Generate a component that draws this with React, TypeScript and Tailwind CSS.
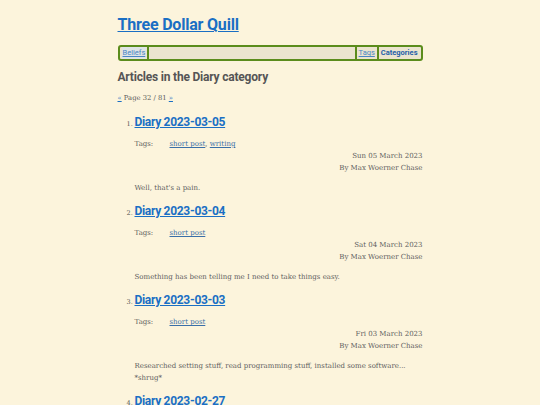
const heading = "font-['Roboto','Noto_Sans',sans-serif]";
const body = "font-['DejaVu_Serif','Liberation_Serif',serif]";

type Article = {
  title: string;
  tags: string[];
  date: string;
  summary: string[];
};

const articles: Article[] = [
  {
    title: "Diary 2023-03-05",
    tags: ["short post", "writing"],
    date: "Sun 05 March 2023",
    summary: ["Well, that's a pain."],
  },
  {
    title: "Diary 2023-03-04",
    tags: ["short post"],
    date: "Sat 04 March 2023",
    summary: ["Something has been telling me I need to take things easy."],
  },
  {
    title: "Diary 2023-03-03",
    tags: ["short post"],
    date: "Fri 03 March 2023",
    summary: [
      "Researched setting stuff, read programming stuff, installed some software...",
      "*shrug*",
    ],
  },
  {
    title: "Diary 2023-02-27",
    tags: ["short post"],
    date: "Mon 27 February 2023",
    summary: ["..."],
  },
];

function Bar() {
  return <span className="mx-[1px] inline-block h-[12px] w-[2px] bg-[#5b8c1c]" />;
}

export default function App() {
  return (
    <div className="h-[405px] overflow-hidden bg-[#fcf4dc]">
      <div className="mx-auto w-[305px] pt-[14px]">
        <h1 className={`${heading} text-[16px] font-bold leading-[22px] tracking-[-0.2px]`}>
          <a href="#" className="text-[#1a6fc4] underline">
            Three Dollar Quill
          </a>
        </h1>

        <nav className={`${heading} mt-[9px] flex h-[16px] items-center rounded-[3px] border-2 border-[#5b8c1c] bg-[#ebe4cf] px-[2px] text-[7.5px]`}>
          <a href="#" className="bg-[#dfe5e6] px-[1px] text-[#4a86c4] underline">
            Beliefs
          </a>
          <Bar />
          <div className="flex-1" />
          <Bar />
          <a href="#" className="px-[1px] text-[#4a86c4] underline">
            Tags
          </a>
          <Bar />
          <a href="#" className="px-[1px] font-bold text-[#1f5fa8]">
            Categories
          </a>
        </nav>

        <h2 className={`${heading} mt-[8px] text-[12px] font-bold leading-[16px] tracking-[-0.2px] text-[#555555]`}>
          Articles in the Diary category
        </h2>

        <p className={`${body} mt-[8px] text-[6.8px] leading-[10px] text-[#5a5a5a]`}>
          <a href="#" className="text-[#1a6fc4] underline">«</a> Page 32 / 81{" "}
          <a href="#" className="text-[#1a6fc4] underline">»</a>
        </p>

        <ol className="mt-[11px] pl-[17px]">
          {articles.map((a, i) => (
            <li key={a.title} className="mb-[9px]">
              <div className="flex items-baseline">
                <span className={`${body} -ml-[8px] w-[8px] text-[6.5px] text-[#555555]`}>{i + 1}.</span>
                <a href="#" className={`${heading} text-[12px] font-bold leading-[16px] tracking-[-0.3px] text-[#1a6fc4] underline`}>
                  {a.title}
                </a>
              </div>
              <div className={`${body} text-[7px] leading-[12px] text-[#5e5e5e]`}>
                <div className="mt-[8px] flex">
                  <span className="w-[35px]">Tags:</span>
                  <span>
                    {a.tags.map((t, j) => (
                      <span key={t}>
                        <a href="#" className="text-[#3a6fa8] underline">{t}</a>
                        {j < a.tags.length - 1 ? ", " : ""}
                      </span>
                    ))}
                  </span>
                </div>
                <div className="text-right">{a.date}</div>
                <div className="text-right">By Max Woerner Chase</div>
                <div className="mt-[8px]">
                  {a.summary.map((s) => (
                    <div key={s}>{s}</div>
                  ))}
                </div>
              </div>
            </li>
          ))}
        </ol>
      </div>
    </div>
  );
}
